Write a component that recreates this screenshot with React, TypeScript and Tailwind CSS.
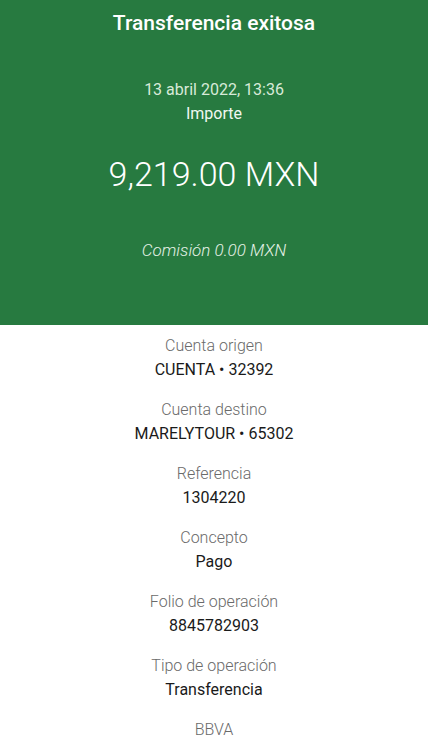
const details = [
  { label: "Cuenta origen", value: "CUENTA • 32392" },
  { label: "Cuenta destino", value: "MARELYTOUR • 65302" },
  { label: "Referencia", value: "1304220" },
  { label: "Concepto", value: "Pago" },
  { label: "Folio de operación", value: "8845782903" },
  { label: "Tipo de operación", value: "Transferencia" },
];

export default function App() {
  return (
    <div className="w-[428px] h-[749px] overflow-hidden bg-white font-['Roboto',sans-serif]">
      <div className="bg-[#277a40] h-[325px] flex flex-col items-center text-white">
        <h1 className="mt-[10px] text-[21px] leading-[26px] font-medium">
          Transferencia exitosa
        </h1>
        <p className="mt-[42px] text-[16px] leading-[24px] text-[#d8ead9]">
          13 abril 2022, 13:36
        </p>
        <p className="text-[16px] leading-[24px] text-[#f2f8f2]">Importe</p>
        <p className="mt-[28px] text-[34px] leading-[40px] font-light">
          9,219.00 MXN
        </p>
        <p className="mt-[44px] text-[17px] leading-[24px] italic font-light text-[#e4f1e5]">
          Comisión 0.00 MXN
        </p>
      </div>
      <div className="flex flex-col items-center pt-[9px]">
        {details.map((d) => (
          <div key={d.label} className="flex flex-col items-center h-[64px]">
            <p className="text-[16px] leading-[24px] text-[#6a6a6a] font-light">
              {d.label}
            </p>
            <p className="text-[16px] leading-[24px] text-[#1a1a1a]">
              {d.value}
            </p>
          </div>
        ))}
        <p className="text-[16px] leading-[24px] text-[#6a6a6a] font-light">
          BBVA
        </p>
      </div>
    </div>
  );
}
